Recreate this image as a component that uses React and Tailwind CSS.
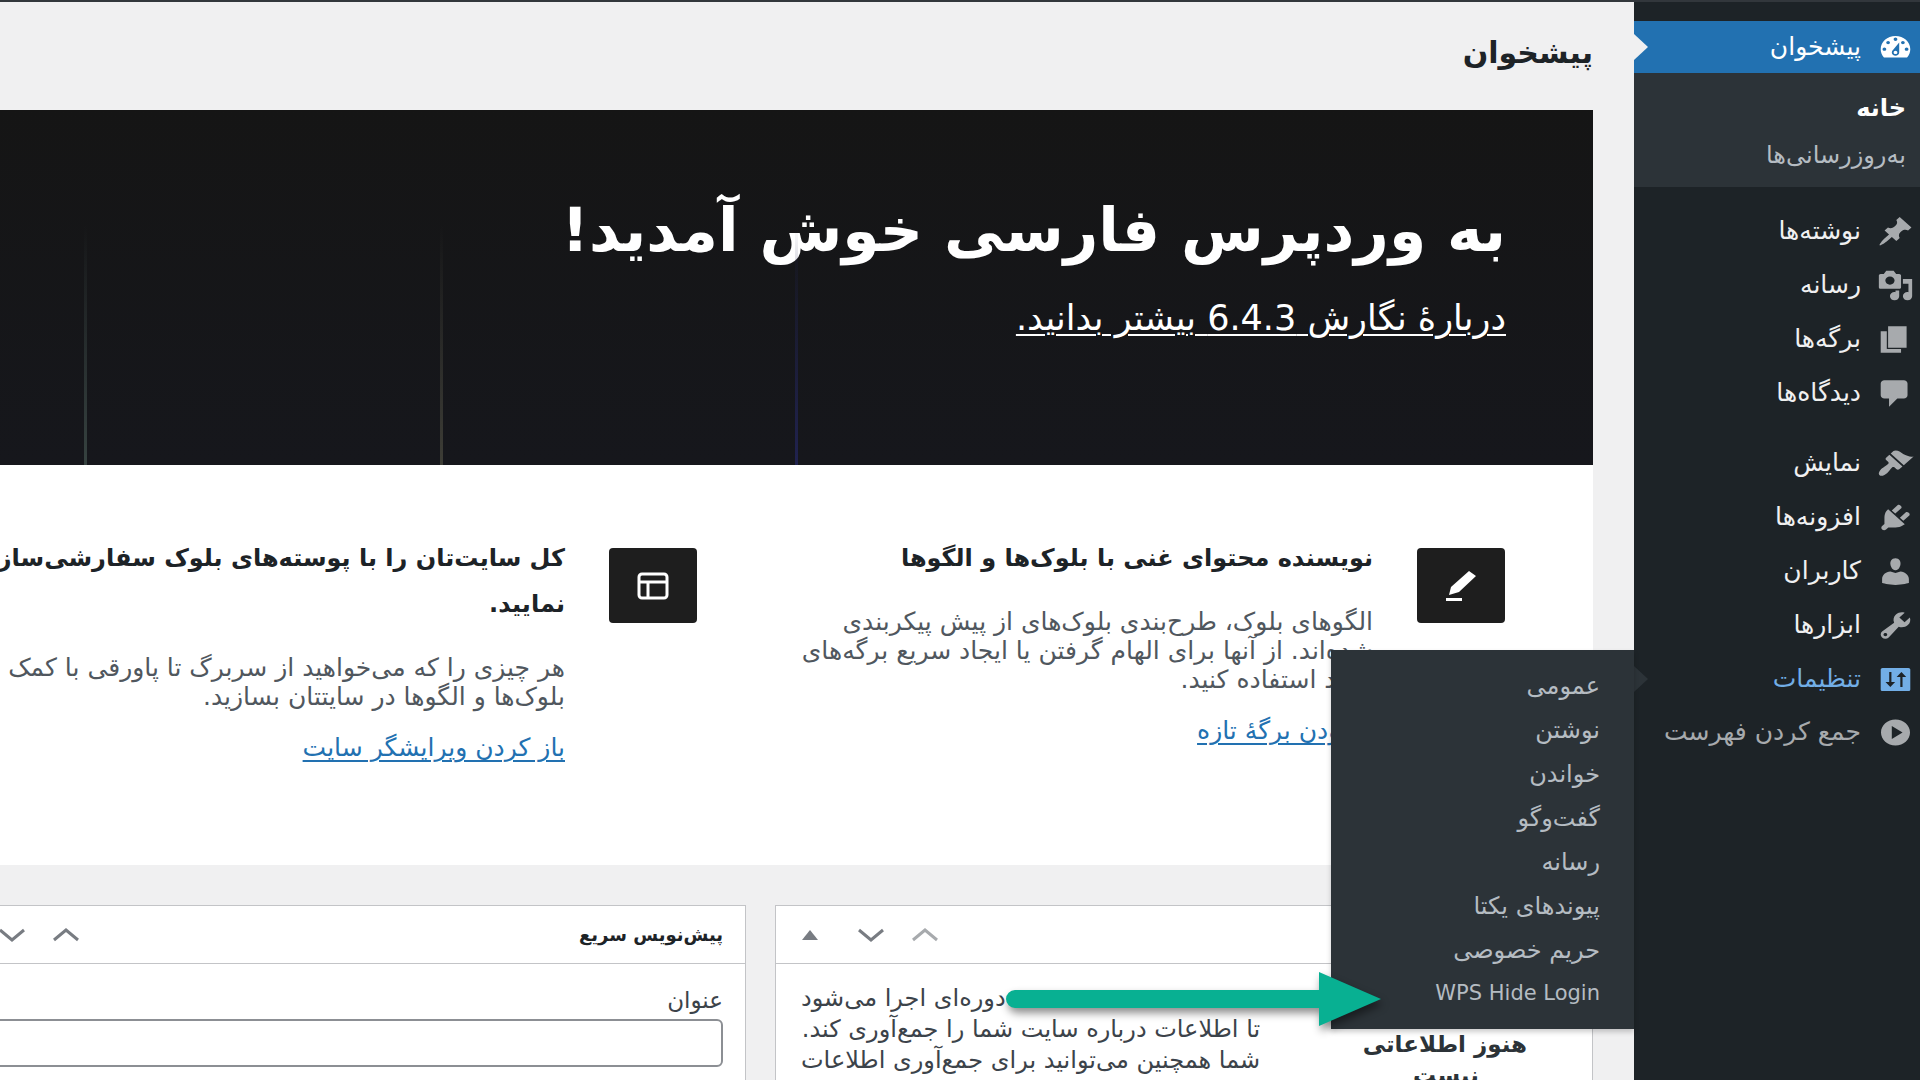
const icons = {
  dashboard:
    'M3.76 16h12.48c1.1-1.37 1.76-3.11 1.76-5 0-4.42-3.58-8-8-8s-8 3.58-8 8c0 1.89.66 3.63 1.76 5zM10 4c.55 0 1 .45 1 1s-.45 1-1 1-1-.45-1-1 .45-1 1-1zM6 6c.55 0 1 .45 1 1s-.45 1-1 1-1-.45-1-1 .45-1 1-1zm8 0c.55 0 1 .45 1 1s-.45 1-1 1-1-.45-1-1 .45-1 1-1zm-5.37 5.55L12 7v6c0 1.1-.9 2-2 2s-2-.9-2-2c0-.57.24-1.08.63-1.45zM4 10c.55 0 1 .45 1 1s-.45 1-1 1-1-.45-1-1 .45-1 1-1zm12 0c.55 0 1 .45 1 1s-.45 1-1 1-1-.45-1-1 .45-1 1-1zm-5 3c0-.55-.45-1-1-1s-1 .45-1 1 .45 1 1 1 1-.45 1-1z',
  posts:
    'M10.44 3.02l1.82-1.82 6.36 6.35-1.83 1.82c-1.05-.68-2.48-.57-3.41.36l-.75.75c-.92.93-1.04 2.35-.35 3.41l-1.83 1.82-2.41-2.41-2.8 2.79c-.42.42-3.38 2.71-3.8 2.29s1.86-3.39 2.28-3.81l2.79-2.79L4.1 9.36l1.83-1.82c1.05.69 2.48.57 3.4-.36l.75-.75c.93-.92 1.05-2.35.36-3.41z',
  media:
    'M13 11V4c0-.55-.45-1-1-1h-1.67L9 1H5L3.67 3H2c-.55 0-1 .45-1 1v7c0 .55.45 1 1 1h10c.55 0 1-.45 1-1zM7 4.5c1.38 0 2.5 1.12 2.5 2.5S8.38 9.5 7 9.5 4.5 8.38 4.5 7 5.62 4.5 7 4.5zM14 6h5v10.5c0 1.38-1.12 2.5-2.5 2.5S14 17.88 14 16.5s1.12-2.5 2.5-2.5c.17 0 .34.02.5.05V9h-3V6zm-4 8.05V13h2v3.5c0 1.38-1.12 2.5-2.5 2.5S7 17.88 7 16.5 8.12 14 9.5 14c.17 0 .34.02.5.05z',
  pages: 'M6 15V2h10v13H6zm-.7.7h7.7V18H2V5h3.3z',
  comments:
    'M4 2h10.5c1.1 0 2 .9 2 2v7c0 1.1-.9 2-2 2H11l-4.5 5v-5H4c-1.1 0-2-.9-2-2V4c0-1.1.9-2 2-2z',
  appearance:
    'M14.48 11.06L7.41 3.99l1.5-1.5c.5-.56 2.3-.47 3.51.32 1.21.8 1.43 1.28 2.91 2.1 1.18.64 2.45 1.26 4.45.85zm-.71.71L6.7 4.7 4.93 6.47c-.39.39-.39 1.02 0 1.41l1.06 1.06c.39.39.39 1.03 0 1.42-.6.6-1.43 1.11-2.21 1.69-.35.26-.7.53-1.01.84C1.43 14.23.4 16.08 1.4 17.07c.99 1 2.84-.03 4.18-1.36.31-.31.58-.66.85-1.02.57-.78 1.08-1.61 1.69-2.21.39-.39 1.02-.39 1.41 0l1.06 1.06c.39.39 1.02.39 1.41 0z',
  plugins:
    'M13.11 4.36L9.87 7.6 8 5.73l3.24-3.24c.35-.34 1.05-.2 1.56.32.52.51.66 1.21.31 1.55zm-8 1.77l.91-1.12 9.01 9.01-1.19.84c-.71.71-2.63 1.16-3.82 1.16H6.14L4.9 17.26c-.59.59-1.54.59-2.12 0-.59-.58-.59-1.53 0-2.12l1.24-1.24v-3.88c0-1.13.4-3.19 1.09-3.89zm7.26 3.97l3.24-3.24c.34-.35 1.04-.21 1.55.31.52.51.66 1.21.31 1.55l-3.24 3.25z',
  users:
    'M10 9.25c-2.27 0-2.73-3.44-2.73-3.44C7 4.02 7.82 2 9.97 2c2.16 0 2.98 2.02 2.71 3.81 0 0-.41 3.44-2.68 3.44zm0 1.6L12.72 10c2.39 0 4.52 2.33 4.52 4.53v2.49s-3.65 1.13-7.24 1.13c-3.65 0-7.24-1.13-7.24-1.13v-2.49c0-2.25 1.94-4.53 4.47-4.53z',
  tools:
    'M16.68 9.77c-1.34 1.34-3.3 1.67-4.95.99l-5.41 6.52c-.99.99-2.59.99-3.58 0s-.99-2.59 0-3.57l6.52-5.42c-.68-1.65-.35-3.61.99-4.95 1.28-1.28 3.12-1.62 4.72-1.06l-2.89 2.89 2.82 2.82 2.86-2.87c.53 1.58.18 3.39-1.08 4.65zM3.81 16.21c.4.39 1.04.39 1.43 0 .4-.4.4-1.04 0-1.43-.39-.4-1.03-.4-1.43 0-.39.39-.39 1.03 0 1.43z',
  settings:
    'M18 16V4c0-.55-.45-1-1-1H3c-.55 0-1 .45-1 1v12c0 .55.45 1 1 1h14c.55 0 1-.45 1-1zM6.6 5.500h1.200v6h2L7.200 14.500 4.600 11.500h2zM12.600 14.500V8.500h-2L13.200 5.500l2.600 3h-2v6z',
  collapse:
    'M10 2.16c-4.33 0-7.84 3.51-7.84 7.84s3.51 7.84 7.84 7.84 7.84-3.51 7.84-7.84S14.33 2.16 10 2.16zM8 13.88V6.12l5.82 3.85z',
};

const contentMenu = [
  { label: 'نوشته‌ها', icon: 'posts' },
  { label: 'رسانه', icon: 'media' },
  { label: 'برگه‌ها', icon: 'pages' },
  { label: 'دیدگاه‌ها', icon: 'comments' },
];

const adminMenu = [
  { label: 'نمایش', icon: 'appearance' },
  { label: 'افزونه‌ها', icon: 'plugins' },
  { label: 'کاربران', icon: 'users' },
  { label: 'ابزارها', icon: 'tools' },
];

const settingsMenu = [
  { label: 'عمومی' },
  { label: 'نوشتن' },
  { label: 'خواندن' },
  { label: 'گفت‌وگو' },
  { label: 'رسانه' },
  { label: 'پیوندهای یکتا' },
  { label: 'حریم خصوصی' },
  { label: 'WPS Hide Login', latin: true },
];

function MenuIcon({ name }) {
  return (
    <svg viewBox="0 0 20 20" preserveAspectRatio="none" className="h-[33px] w-[37px] shrink-0" fill="currentColor" aria-hidden="true">
      <path fillRule="evenodd" d={icons[name]} />
    </svg>
  );
}

function MenuItem({ label, icon }) {
  return (
    <li>
      <a href="#" className="flex h-[54px] items-center gap-4 pr-[6px] text-[#f0f0f1]">
        <span className="text-[#a7aaad]">
          <MenuIcon name={icon} />
        </span>
        {label}
      </a>
    </li>
  );
}

function SettingsFlyout() {
  return (
    <ul className="absolute right-full -top-[2px] z-20 w-[303px] bg-[#2c3338] pt-[14px] pb-[13px] text-[24px] text-[#b5bcc2] shadow-[0_3px_5px_rgba(0,0,0,0.2)]">
      {settingsMenu.map(({ label, latin }) => (
        <li key={label}>
          <a href="#" className="flex h-11 items-center pr-[34px]">
            <bdi className={latin ? 'text-[21px]' : undefined}>{label}</bdi>
          </a>
        </li>
      ))}
    </ul>
  );
}

function Sidebar() {
  return (
    <nav className="relative z-10 w-[286px] shrink-0 bg-[#1d2327] pt-[19px] text-[25px]">
      <ul>
        <li>
          <a href="#" className="relative flex h-[52px] items-center gap-4 bg-[#2271b1] pr-[6px] text-white">
            <MenuIcon name="dashboard" />
            پیشخوان
            <svg viewBox="0 0 14 26" className="absolute left-0 top-[13px] h-[26px] w-[14px]" fill="#f0f0f1" aria-hidden="true">
              <path d="M0 0l14 13L0 26z" />
            </svg>
          </a>
          <ul className="mb-[17px] bg-[#2c3338] pt-[11px] pb-[9px] text-[24px]">
            <li>
              <a href="#" className="flex h-[47px] items-center pr-[14px] font-bold text-white">خانه</a>
            </li>
            <li>
              <a href="#" className="flex h-[47px] items-center pr-[14px] text-[#b5bcc2]">به‌روزرسانی‌ها</a>
            </li>
          </ul>
        </li>
        {contentMenu.map((item) => (
          <MenuItem key={item.icon} {...item} />
        ))}
      </ul>
      <ul className="mt-4">
        {adminMenu.map((item) => (
          <MenuItem key={item.icon} {...item} />
        ))}
        <li className="relative">
          <a href="#" className="flex h-[54px] items-center gap-4 pr-[6px] text-[#72aee6]">
            <MenuIcon name="settings" />
            تنظیمات
            <svg viewBox="0 0 14 26" className="absolute left-0 top-[14px] h-[26px] w-[14px]" fill="#2c3338" aria-hidden="true">
              <path d="M0 0l14 13L0 26z" />
            </svg>
          </a>
          <SettingsFlyout />
        </li>
      </ul>
      <button type="button" className="flex h-[52px] w-full items-center gap-4 pr-[6px] text-[#a7aaad]">
        <MenuIcon name="collapse" />
        جمع کردن فهرست
      </button>
    </nav>
  );
}

function WelcomeBanner() {
  return (
    <div className="relative h-[355px] bg-linear-to-b from-[#151515] to-[#16171c] pt-[72px] pr-[87px] text-white">
      <h2 className="text-[60px] leading-[96px] font-bold">به وردپرس فارسی خوش آمدید!</h2>
      <a href="#" className="mt-3 inline-block text-[35px] leading-[56px] underline decoration-2 underline-offset-4">
        دربارهٔ نگارش 6.4.3 بیشتر بدانید.
      </a>
      <div className="absolute bottom-0 left-[84px] h-[240px] w-[3px] bg-linear-to-b from-transparent to-[#364240]" />
      <div className="absolute bottom-0 left-[440px] h-[240px] w-[3px] bg-linear-to-b from-transparent to-[#3d3d36]" />
      <div className="absolute bottom-0 left-[795px] h-[240px] w-[3px] bg-linear-to-b from-transparent to-[#20224f]" />
    </div>
  );
}

function WelcomeColumn({ icon, title, text, link }) {
  return (
    <section className="flex w-[760px] shrink-0 items-start gap-11">
      <div className="mt-[13px] flex h-[75px] w-[88px] shrink-0 items-center justify-center rounded bg-[#1e1e1e] text-white">
        {icon}
      </div>
      <div className="whitespace-nowrap">
        <h3 className="text-[24px] leading-[46px] font-bold text-[#1d2327]">{title}</h3>
        <p className="mt-[26px] text-[25px] leading-[29px] text-[#50575e]">{text}</p>
        <a href="#" className="mt-[22px] inline-block text-[25px] leading-[29px] text-[#2271b1] underline decoration-2 underline-offset-4">
          {link}
        </a>
      </div>
    </section>
  );
}

function Chevron({ up, label }) {
  return (
    <button type="button" aria-label={label}>
      <svg viewBox="0 0 26 14" className="h-[14px] w-[26px]" fill="none" stroke="currentColor" strokeWidth="3" aria-hidden="true">
        <path d={up ? 'M1 12L13 2L25 12' : 'M1 2L13 12L25 2'} />
      </svg>
    </button>
  );
}

function WidgetHeader({ title, first }) {
  return (
    <header className="flex h-[58px] items-center border-b border-[#c3c4c7] pr-[22px] pl-[26px] text-[#787c82]">
      <h2 className="flex-1 text-[18px] font-bold text-[#1d2327]">{title}</h2>
      <span className={first ? 'flex text-[#a7aaad]' : 'flex'}>
        <Chevron up label="بالا" />
      </span>
      <span className="mr-7 flex">
        <Chevron label="پایین" />
      </span>
      <button type="button" aria-label="بستن" className="mr-10">
        <svg viewBox="0 0 16 10" className="h-[10px] w-4" fill="currentColor" aria-hidden="true">
          <path d="M8 0l8 10H0z" />
        </svg>
      </button>
    </header>
  );
}

function HealthWidget() {
  return (
    <section className="w-[818px] shrink-0 border border-[#c3c4c7] bg-white">
      <WidgetHeader first />
      <div className="flex justify-between pt-[19px] pr-[65px] pl-[25px]">
        <p className="w-[162px] pt-[46px] text-center text-[23px] leading-[31px] font-bold whitespace-nowrap text-[#2c3338]">
          هنوز اطلاعاتی
          <br />
          نیست
        </p>
        <div className="text-[24px] leading-[31px] whitespace-nowrap text-[#3c434a]">
          <p className="text-left">دوره‌ای اجرا می‌شود</p>
          <p>تا اطلاعات درباره سایت شما را جمع‌آوری کند.</p>
          <p>شما همچنین می‌توانید برای جمع‌آوری اطلاعات</p>
        </div>
      </div>
    </section>
  );
}

function DraftWidget() {
  return (
    <section className="w-[830px] shrink-0 border border-[#c3c4c7] bg-white">
      <WidgetHeader title="پیش‌نویس سریع" />
      <div className="pt-5 pr-[22px] pl-6">
        <label htmlFor="draft-title" className="block text-[23px] leading-[32px] text-[#3c434a]">عنوان</label>
        <input id="draft-title" type="text" className="mt-[3px] h-12 w-full rounded-md border-2 border-[#8c8f94] px-3" />
      </div>
    </section>
  );
}

function Arrow() {
  return (
    <svg
      viewBox="0 0 375 54"
      className="absolute bottom-[54px] left-[1006px] z-30 h-[54px] w-[375px] drop-shadow-[2px_5px_4px_rgba(0,0,0,0.45)]"
      fill="#08b092"
      aria-hidden="true"
    >
      <path d="M9 18h304V0l62 27-62 27V36H9a9 9 0 0 1 0-18z" />
    </svg>
  );
}

export default function App() {
  return (
    <div dir="rtl" className="relative flex h-screen flex-col overflow-hidden bg-[#f0f0f1] font-['DejaVu_Sans',sans-serif]">
      <div className="h-[2px] shrink-0 bg-[#32373c]" />
      <div className="flex min-h-0 flex-1">
        <Sidebar />
        <main className="min-w-0 flex-1 pr-[41px]">
          <h1 className="h-[108px] pt-6 text-[30px] leading-[54px] font-bold text-[#1d2327]">پیشخوان</h1>
          <WelcomeBanner />
          <div className="flex h-[400px] gap-12 bg-white pt-[70px] pr-[88px]">
            <WelcomeColumn
              icon={
                <svg viewBox="0 0 32 32" className="h-8 w-8" fill="currentColor" aria-hidden="true">
                  <path d="M24 1l7 5-17 16-10 3 2-8zM1 28h16v3H1z" />
                </svg>
              }
              title="نویسنده محتوای غنی با بلوک‌ها و الگوها"
              text={
                <>
                  الگوهای بلوک، طرح‌بندی بلوک‌های از پیش پیکربندی
                  <br />
                  شده‌اند. از آنها برای الهام گرفتن یا ایجاد سریع برگه‌های
                  <br />
                  جدید استفاده کنید.
                </>
              }
              link="افزودن برگهٔ تازه"
            />
            <WelcomeColumn
              icon={
                <svg viewBox="0 0 32 28" className="h-7 w-8" fill="none" stroke="currentColor" strokeWidth="3" aria-hidden="true">
                  <rect x="2" y="2" width="28" height="24" rx="3" />
                  <path d="M2 10h28M11 10v16" />
                </svg>
              }
              title={
                <>
                  کل سایت‌تان را با پوسته‌های بلوک سفارشی‌ساز
                  <br />
                  نمایید.
                </>
              }
              text={
                <>
                  هر چیزی را که می‌خواهید از سربرگ تا پاورقی با کمک
                  <br />
                  بلوک‌ها و الگوها در سایتتان بسازید.
                </>
              }
              link="باز کردن ویرایشگر سایت"
            />
          </div>
          <div className="mt-10 flex h-[300px] gap-[29px]">
            <HealthWidget />
            <DraftWidget />
          </div>
        </main>
      </div>
      <Arrow />
    </div>
  );
}
